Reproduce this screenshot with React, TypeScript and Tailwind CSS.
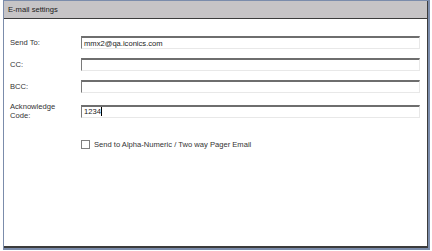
import React from "react";

const font = { fontFamily: '"Liberation Sans", Arial, sans-serif' };

function Field({ value, caret }: { value?: string; caret?: boolean }) {
  return (
    <div className="h-[13px] w-[339px] border-t-2 border-l border-r border-b border-t-[#6e6e6e] border-l-[#7a7a7a] border-r-[#e8e8e8] border-b-[#e8e8e8] bg-white flex items-center pl-[2px] text-[7.6px] leading-[9px] text-[#222]">
      {value}
      {caret && <span className="inline-block w-px h-[9px] bg-black" />}
    </div>
  );
}

export default function App() {
  return (
    <div className="w-[432px] h-[251px] bg-white relative" style={font}>
      <div className="ml-[3px] w-[427px] h-[250px] border-l border-t border-r-2 border-b-2 border-[#7b8cab]">
        <div className="h-full flex flex-col border-r border-b-2 border-[#3c3c3c]">
          <div className="h-[18px] shrink-0 bg-[#c6c4c6] border-b border-[#3c3c3c] flex items-center pl-[4px] text-[7.6px] text-[#202020]">
            E-mail settings
          </div>
          <div className="flex flex-col pt-[17px] pl-[6px] gap-[9px] text-[7.6px] text-[#333]">
            <div className="flex items-center">
              <div className="w-[71px]">Send To:</div>
              <Field value="mmx2@qa.iconics.com" />
            </div>
            <div className="flex items-center">
              <div className="w-[71px]">CC:</div>
              <Field />
            </div>
            <div className="flex items-center">
              <div className="w-[71px]">BCC:</div>
              <Field />
            </div>
            <div className="flex items-center">
              <div className="w-[71px] leading-[9px]">
                Acknowledge
                <br />
                Code:
              </div>
              <Field value="1234" caret />
            </div>
            <div className="flex items-center pl-[71px] mt-[10px] gap-[4px]">
              <div className="w-[9px] h-[9px] border border-[#808080] bg-white" />
              <div>Send to Alpha-Numeric / Two way Pager Email</div>
            </div>
          </div>
        </div>
      </div>
    </div>
  );
}
